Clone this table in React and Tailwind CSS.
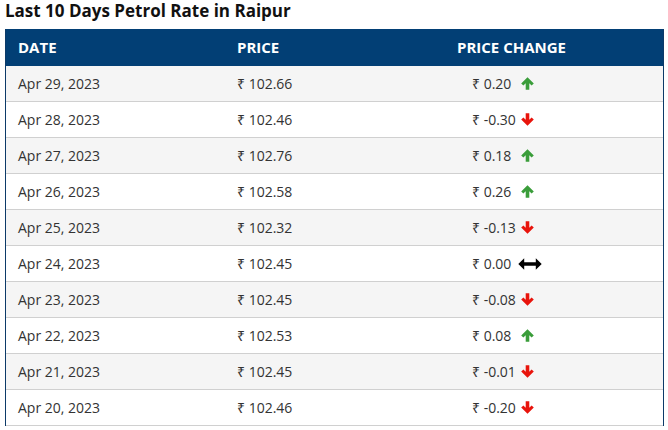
import React from "react";

const rows = [
  ["Apr 29, 2023", "102.66", "0.20", "up"],
  ["Apr 28, 2023", "102.46", "-0.30", "down"],
  ["Apr 27, 2023", "102.76", "0.18", "up"],
  ["Apr 26, 2023", "102.58", "0.26", "up"],
  ["Apr 25, 2023", "102.32", "-0.13", "down"],
  ["Apr 24, 2023", "102.45", "0.00", "same"],
  ["Apr 23, 2023", "102.45", "-0.08", "down"],
  ["Apr 22, 2023", "102.53", "0.08", "up"],
  ["Apr 21, 2023", "102.45", "-0.01", "down"],
  ["Apr 20, 2023", "102.46", "-0.20", "down"],
];

function Up() {
  return (
    <svg width="13" height="13" viewBox="0 0 13 13">
      <path d="M6.5 0.3 L12.8 6.6 L10.6 8.6 L8.3 6.2 L8.3 12.7 L4.7 12.7 L4.7 6.2 L2.4 8.6 L0.2 6.6 Z" fill="#3a9d3a" />
    </svg>
  );
}
function Down() {
  return (
    <svg width="13" height="13" viewBox="0 0 13 13">
      <path d="M6.5 12.7 L12.8 6.4 L10.6 4.4 L8.3 6.8 L8.3 0.3 L4.7 0.3 L4.7 6.8 L2.4 4.4 L0.2 6.4 Z" fill="#e8140c" />
    </svg>
  );
}
function Same() {
  return (
    <svg width="24" height="12" viewBox="0 0 24 12">
      <path d="M0.3 6 L6.2 0.3 L6.2 4.2 L17.8 4.2 L17.8 0.3 L23.7 6 L17.8 11.7 L17.8 7.8 L6.2 7.8 L6.2 11.7 Z" fill="#000" />
    </svg>
  );
}

export default function App() {
  return (
    <div className="w-[668px] h-[430px] bg-white" style={{ fontFamily: '"Open Sans", sans-serif' }}>
      <div className="px-[5px]">
        <h2 className="text-[17px] font-bold text-[#111] leading-[22px] h-[29px]">Last 10 Days Petrol Rate in Raipur</h2>
        <div className="w-[659px] border-l border-r border-[#0c3a68]">
          <div className="grid grid-cols-[220px_220px_1fr] h-[37px] items-center bg-[#023f75] text-white text-[15px] font-bold">
            <div className="pl-[12px]">DATE</div>
            <div className="pl-[11px]">PRICE</div>
            <div className="pl-[11px]">PRICE CHANGE</div>
          </div>
          {rows.map((r, i) => (
            <div
              key={i}
              className={
                "grid grid-cols-[220px_220px_1fr] h-[36px] items-center border-b border-[#d0d0d0] text-[14px] text-[#333] " +
                (i % 2 === 0 ? "bg-[#f5f5f5]" : "bg-white")
              }
            >
              <div className="pl-[12px]">{r[0]}</div>
              <div className="pl-[11px]">₹ {r[1]}</div>
              <div className="pl-[26px] flex items-center">
                <span className="w-[48px]">₹ {r[2]}</span>
                {r[3] === "up" && <span className="ml-[1px]"><Up /></span>}
                {r[3] === "down" && <span className="ml-[1px]"><Down /></span>}
                {r[3] === "same" && <span className="ml-[-2px]"><Same /></span>}
              </div>
            </div>
          ))}
        </div>
      </div>
    </div>
  );
}
